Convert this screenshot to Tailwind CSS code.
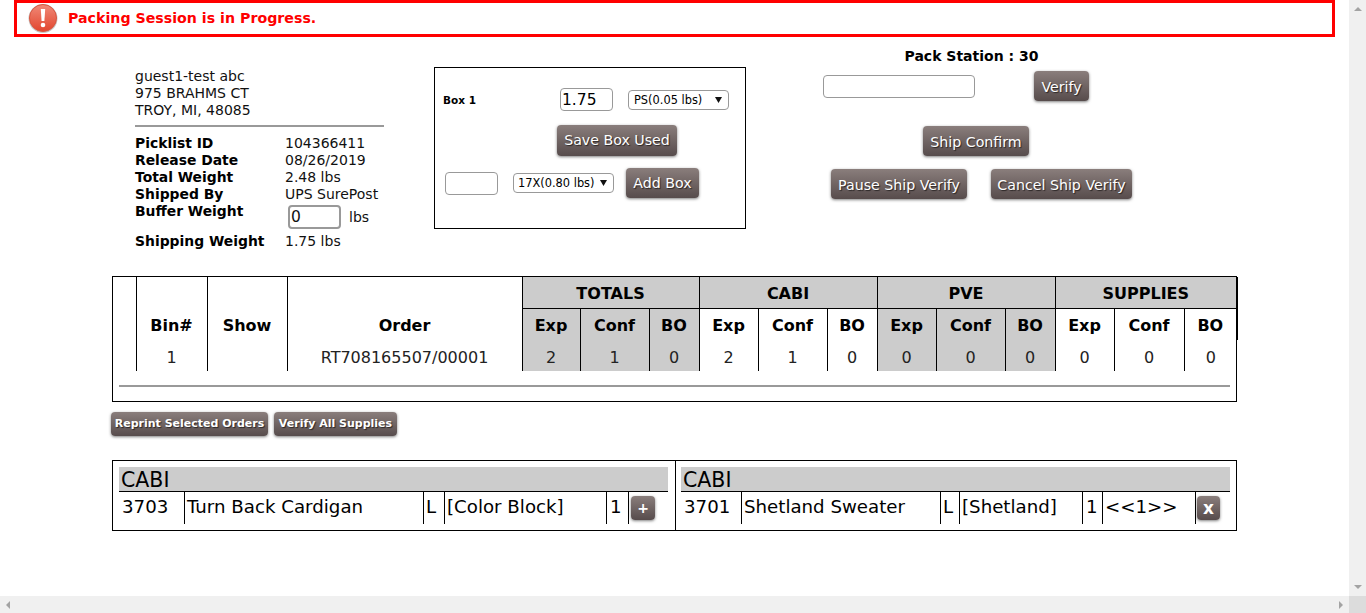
<!doctype html>
<html lang="en">
  <head>
    <script src="https://cdn.jsdelivr.net/npm/@tailwindcss/browser@4"></script>
    <meta charset="UTF-8" />
    <title>Packing Session</title>
  </head>
  <body class="bg-white text-black font-['DejaVu_Sans',sans-serif] overflow-hidden">
    <div class="flex flex-col h-[613px] w-[1366px]">
      <div class="flex flex-1 min-h-0">
        <!-- page -->
        <main class="w-[1349px] h-[596px] overflow-hidden">
          <!-- alert -->
          <div class="ml-[14px] w-[1321px] h-[37px] border-[3px] border-[#ff0000] flex items-center pl-[11px]">
            <svg class="w-[30px] h-[31px] shrink-0" viewBox="0 0 30 31">
              <defs>
                <linearGradient id="alertFill" x1="0" y1="0" x2="0" y2="1">
                  <stop offset="0" stop-color="#f08a78" />
                  <stop offset="1" stop-color="#e2462e" />
                </linearGradient>
              </defs>
              <circle cx="15" cy="15.5" r="14.5" fill="#c9c4c2" />
              <circle cx="15" cy="15" r="13.5" fill="url(#alertFill)" stroke="#d9553f" />
              <path d="M12.8 6h4.4l-.8 12h-2.8z" fill="#fff" />
              <circle cx="15" cy="22" r="2.3" fill="#fff" />
            </svg>
            <span class="ml-[10px] text-[14.2px] font-bold text-[#ff0000]">Packing Session is in Progress.</span>
          </div>

          <!-- top section -->
          <div class="flex h-[239px] items-start">
            <!-- customer -->
            <div class="ml-[135px] w-[249px] mt-[31px] text-[14px] leading-[17px] text-[#111]">
              <div>guest1-test abc</div>
              <div>975 BRAHMS CT</div>
              <div>TROY, MI, 48085</div>
              <div class="h-[2px] bg-[#999] mt-[6px] mb-[8px]"></div>
              <div class="flex"><b class="w-[150px] text-black text-[13.9px]">Picklist ID</b><span>104366411</span></div>
              <div class="flex"><b class="w-[150px] text-black text-[13.9px]">Release Date</b><span>08/26/2019</span></div>
              <div class="flex"><b class="w-[150px] text-black text-[13.9px]">Total Weight</b><span>2.48 lbs</span></div>
              <div class="flex"><b class="w-[150px] text-black text-[13.9px]">Shipped By</b><span>UPS SurePost</span></div>
              <div class="flex h-[30px]">
                <b class="w-[153px] text-black text-[13.9px]">Buffer Weight</b>
                <input value="0" class="w-[53px] h-[24px] mt-[2px] border-2 border-[#999] rounded-[4px] text-[15.5px] pl-[1px] outline-none" />
                <span class="ml-[8px] mt-[6px]">lbs</span>
              </div>
              <div class="flex"><b class="w-[150px] text-black text-[13.9px]">Shipping Weight</b><span>1.75 lbs</span></div>
            </div>

            <!-- box -->
            <div class="ml-[50px] mt-[30px] w-[312px] h-[162px] border border-black relative">
              <div class="flex items-center mt-[20px] h-[23px]">
                <b class="ml-[8px] mt-[3px] w-[117px] text-[10.5px]">Box 1</b>
                <input value="1.75" class="w-[53px] h-[23px] border border-[#999] rounded-[4px] text-[15.5px] pl-[1px] pt-[2px] outline-none" />
                <div class="relative ml-[15px]">
                  <select class="block appearance-none w-[101px] h-[20px] border border-[#999] rounded-[4px] text-[11.4px] pl-[5px] pt-[1px] bg-white outline-none">
                    <option>PS(0.05 lbs)</option>
                  </select>
                  <svg class="absolute right-[7px] top-[7px] w-[7px] h-[6px]" viewBox="0 0 7 6"><path d="M0 0h7L3.500 6z" fill="#111" /></svg>
                </div>
              </div>
              <div class="flex mt-[14px] pl-[122px]">
                <button class="w-[120px] h-[31px] pt-[1px] rounded-[4px] bg-gradient-to-b from-[#8a7e7c] to-[#574c4c] shadow-[0_1px_3px_rgba(0,0,0,0.5)] text-white text-[14.2px] [text-shadow:1px_1px_1px_rgba(0,0,0,0.6)]">Save Box Used</button>
              </div>
              <div class="flex items-center mt-[12px] h-[30px]">
                <input class="ml-[10px] w-[53px] h-[23px] border border-[#999] rounded-[4px] outline-none" />
                <div class="relative ml-[15px]">
                  <select class="block appearance-none w-[101px] h-[20px] border border-[#999] rounded-[4px] text-[11.4px] pl-[4px] pt-[1px] bg-white outline-none">
                    <option>17X(0.80 lbs)</option>
                  </select>
                  <svg class="absolute right-[7px] top-[7px] w-[7px] h-[6px]" viewBox="0 0 7 6"><path d="M0 0h7L3.500 6z" fill="#111" /></svg>
                </div>
                <button class="ml-[12px] w-[73px] h-[30px] pt-[2px] rounded-[4px] bg-gradient-to-b from-[#8a7e7c] to-[#574c4c] shadow-[0_1px_3px_rgba(0,0,0,0.5)] text-white text-[14.2px] [text-shadow:1px_1px_1px_rgba(0,0,0,0.6)]">Add Box</button>
              </div>
            </div>

            <!-- verify -->
            <div class="ml-[77px] w-[309px] mt-[11px]">
              <div class="text-center text-[14px] font-bold leading-[17px] pr-[12px]">Pack Station : 30</div>
              <div class="flex items-start h-[55px] mt-[6px]">
                <input class="mt-[4px] w-[152px] h-[23px] border border-[#999] rounded-[4px] outline-none" />
                <button class="ml-[59px] w-[55px] h-[30px] pt-[3px] rounded-[4px] bg-gradient-to-b from-[#8a7e7c] to-[#574c4c] shadow-[0_1px_3px_rgba(0,0,0,0.5)] text-white text-[14.2px] [text-shadow:1px_1px_1px_rgba(0,0,0,0.6)]">Verify</button>
              </div>
              <div class="flex justify-center">
                <button class="ml-[-3px] w-[106px] h-[30px] pt-[3px] rounded-[4px] bg-gradient-to-b from-[#8a7e7c] to-[#574c4c] shadow-[0_1px_3px_rgba(0,0,0,0.5)] text-white text-[14.2px] [text-shadow:1px_1px_1px_rgba(0,0,0,0.6)]">Ship Confirm</button>
              </div>
              <div class="flex mt-[13px] ml-[8px] gap-[24px]">
                <button class="w-[136px] h-[30px] pt-[3px] rounded-[4px] bg-gradient-to-b from-[#8a7e7c] to-[#574c4c] shadow-[0_1px_3px_rgba(0,0,0,0.5)] text-white text-[14.2px] whitespace-nowrap [text-shadow:1px_1px_1px_rgba(0,0,0,0.6)]">Pause Ship Verify</button>
                <button class="w-[141px] h-[30px] pt-[3px] rounded-[4px] bg-gradient-to-b from-[#8a7e7c] to-[#574c4c] shadow-[0_1px_3px_rgba(0,0,0,0.5)] text-white text-[14.2px] whitespace-nowrap [text-shadow:1px_1px_1px_rgba(0,0,0,0.6)]">Cancel Ship Verify</button>
              </div>
            </div>
          </div>

          <!-- totals -->
          <div class="ml-[112px] w-[1125px] h-[126px] border border-black">
            <table class="table-fixed border-collapse w-[1124px] text-center text-[16px]">
              <colgroup>
                <col class="w-[23px]" /><col class="w-[71px]" /><col class="w-[80px]" /><col class="w-[235px]" />
                <col class="w-[58px]" /><col class="w-[69px]" /><col class="w-[50px]" />
                <col class="w-[59px]" /><col class="w-[69px]" /><col class="w-[50px]" />
                <col class="w-[59px]" /><col class="w-[69px]" /><col class="w-[50px]" />
                <col class="w-[59px]" /><col class="w-[70px]" /><col class="w-[53px]" />
              </colgroup>
              <tbody>
                <tr class="h-[31px]">
                  <td></td><td class="border-l border-black"></td><td class="border-l border-black"></td><td class="border-l border-black"></td>
                  <th colspan="3" class="pt-[4px] border-l border-b border-black bg-[#ccc]">TOTALS</th>
                  <th colspan="3" class="pt-[4px] border-l border-b border-black bg-[#ccc]">CABI</th>
                  <th colspan="3" class="pt-[4px] border-l border-b border-black bg-[#ccc]">PVE</th>
                  <th colspan="3" class="pt-[4px] border-l border-r-2 border-b border-black bg-[#ccc]">SUPPLIES</th>
                </tr>
                <tr class="h-[32px] font-bold [&>td]:pt-[4px]">
                  <td></td><td class="border-l border-black">Bin#</td><td class="border-l border-black">Show</td><td class="border-l border-black">Order</td>
                  <td class="border-l border-black bg-[#ccc]">Exp</td><td class="border-l border-black bg-[#ccc]">Conf</td><td class="border-l border-black bg-[#ccc]">BO</td>
                  <td class="border-l border-black">Exp</td><td class="border-l border-black">Conf</td><td class="border-l border-black">BO</td>
                  <td class="border-l border-black bg-[#ccc]">Exp</td><td class="border-l border-black bg-[#ccc]">Conf</td><td class="border-l border-black bg-[#ccc]">BO</td>
                  <td class="border-l border-black">Exp</td><td class="border-l border-black">Conf</td><td class="border-l border-r-2 border-black">BO</td>
                </tr>
                <tr class="h-[31px] text-[#222] [&>td]:pt-[4px]">
                  <td></td><td class="border-l border-black">1</td><td class="border-l border-black"></td><td class="border-l border-black">RT708165507/00001</td>
                  <td class="border-l border-black bg-[#ccc]">2</td><td class="border-l border-black bg-[#ccc]">1</td><td class="border-l border-black bg-[#ccc]">0</td>
                  <td class="border-l border-black">2</td><td class="border-l border-black">1</td><td class="border-l border-black">0</td>
                  <td class="border-l border-black bg-[#ccc]">0</td><td class="border-l border-black bg-[#ccc]">0</td><td class="border-l border-black bg-[#ccc]">0</td>
                  <td class="border-l border-black">0</td><td class="border-l border-black">0</td><td class="border-l border-black">0</td>
                </tr>
              </tbody>
            </table>
            <div class="h-[2px] bg-[#999] mx-[6px] mt-[14px]"></div>
          </div>

          <!-- actions -->
          <div class="flex ml-[111px] mt-[10px] gap-[6px]">
            <button class="w-[157px] h-[24px] pt-[1px] rounded-[4px] bg-gradient-to-b from-[#8a7e7c] to-[#574c4c] shadow-[0_1px_3px_rgba(0,0,0,0.5)] text-white text-[11px] font-bold [text-shadow:1px_1px_1px_rgba(0,0,0,0.6)]">Reprint Selected Orders</button>
            <button class="w-[123px] h-[24px] pt-[1px] rounded-[4px] bg-gradient-to-b from-[#8a7e7c] to-[#574c4c] shadow-[0_1px_3px_rgba(0,0,0,0.5)] text-white text-[11px] font-bold [text-shadow:1px_1px_1px_rgba(0,0,0,0.6)]">Verify All Supplies</button>
          </div>

          <!-- picked items -->
          <div class="ml-[112px] mt-[24px] w-[1125px] h-[71px] border border-black flex">
            <div class="w-[563px] h-full border-r border-black pl-[6px] pt-[6px]">
              <div class="w-[549px] h-[25px] bg-[#ccc] border-b border-black text-[20.5px] leading-[27px] pl-[2px]">CABI</div>
              <div class="flex h-[32px] w-[549px] text-[18.2px] leading-[30px]">
                <div class="w-[65px] pl-[3px]">3703</div>
                <div class="w-[239px] border-l border-black pl-[2px]">Turn Back Cardigan</div>
                <div class="w-[21px] border-l border-black pl-[2px]">L</div>
                <div class="w-[162px] border-l border-black pl-[2px]">[Color Block]</div>
                <div class="w-[22px] border-l border-black pl-[3px]">1</div>
                <div class="border-l border-black pl-[2px] pt-[4px]">
                  <button class="block w-[24px] h-[24px] rounded-[4px] bg-gradient-to-b from-[#8a7e7c] to-[#574c4c] shadow-[0_1px_3px_rgba(0,0,0,0.5)] text-white text-[14px] leading-[24px] font-bold">+</button>
                </div>
              </div>
            </div>
            <div class="flex-1 h-full pl-[5px] pt-[6px]">
              <div class="w-[549px] h-[25px] bg-[#ccc] border-b border-black text-[20.5px] leading-[27px] pl-[2px]">CABI</div>
              <div class="flex h-[32px] w-[549px] text-[18.2px] leading-[30px]">
                <div class="w-[60px] pl-[3px]">3701</div>
                <div class="w-[199px] border-l border-black pl-[2px]">Shetland Sweater</div>
                <div class="w-[19px] border-l border-black pl-[2px]">L</div>
                <div class="w-[123px] border-l border-black pl-[2px]">[Shetland]</div>
                <div class="w-[20px] border-l border-black pl-[3px]">1</div>
                <div class="w-[93px] border-l border-black pl-[2px]">&lt;&lt;1&gt;&gt;</div>
                <div class="border-l border-black pl-[1px] pt-[4px]">
                  <button class="block w-[23px] h-[24px] rounded-[4px] bg-gradient-to-b from-[#8a7e7c] to-[#574c4c] shadow-[0_1px_3px_rgba(0,0,0,0.5)] text-white text-[17px] leading-[22px] font-bold">x</button>
                </div>
              </div>
            </div>
          </div>
        </main>

        <!-- vertical scrollbar -->
        <div class="w-[17px] h-[596px] bg-[#f0f0f0] flex flex-col justify-between items-center py-[7px]">
          <svg class="w-[8px] h-[4px]" viewBox="0 0 8 4"><path d="M4 0l4 4H0z" fill="#a3a3a3" /></svg>
          <svg class="w-[8px] h-[4px]" viewBox="0 0 8 4"><path d="M0 0h8L4 4z" fill="#a3a3a3" /></svg>
        </div>
      </div>

      <!-- horizontal scrollbar -->
      <div class="flex h-[17px]">
        <div class="w-[1349px] bg-[#f0f0f0] flex justify-between items-center px-[6px]">
          <svg class="w-[4px] h-[8px]" viewBox="0 0 4 8"><path d="M4 0v8L0 4z" fill="#a3a3a3" /></svg>
          <svg class="w-[4px] h-[8px]" viewBox="0 0 4 8"><path d="M0 0v8l4-4z" fill="#a3a3a3" /></svg>
        </div>
        <div class="w-[17px] bg-[#dcdcdc]"></div>
      </div>
    </div>
  </body>
</html>
